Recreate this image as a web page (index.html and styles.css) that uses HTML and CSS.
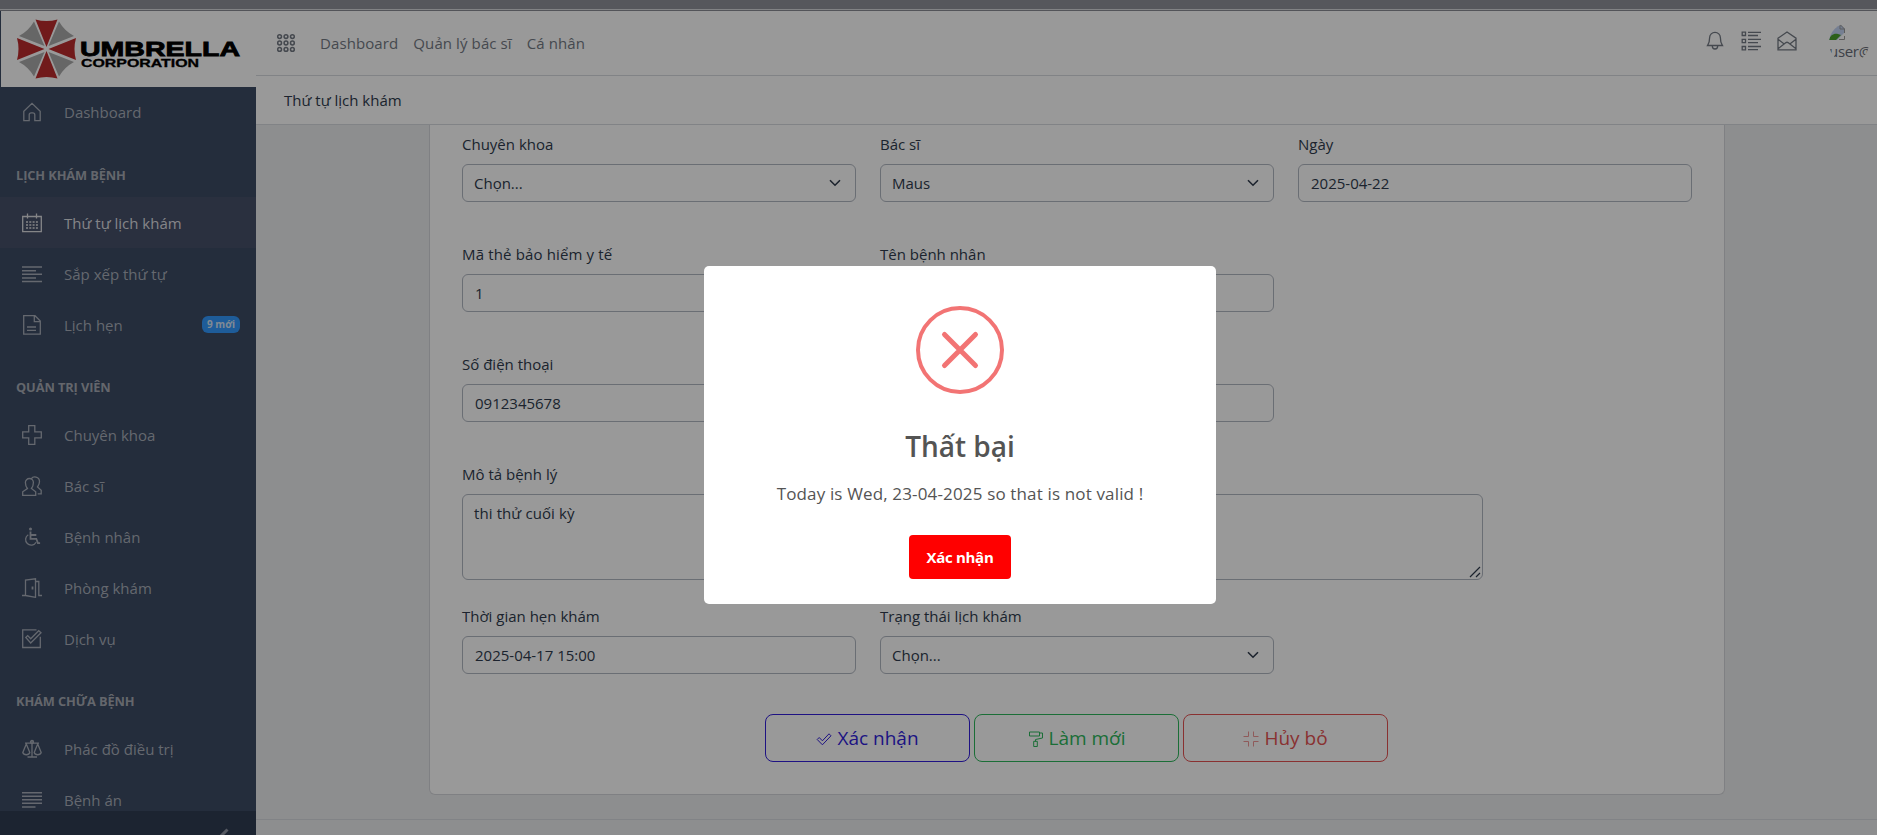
FILE: index.html
```html
<!DOCTYPE html>
<html lang="vi">
<head>
<meta charset="utf-8">
<title>Thứ tự lịch khám</title>
<link rel="stylesheet" href="styles.css">
</head>
<body>
<svg class="sprite" aria-hidden="true">
  <symbol id="home" viewBox="0 0 20 20"><path d="M1.800 18.600V9.200L10 1.400l8.200 7.800v9.400h-5.400v-5.800a2 2 0 0 0-2-2H9.200a2 2 0 0 0-2 2v5.800z"/></symbol>
  <symbol id="calendar" viewBox="0 0 20 20"><path d="M.7 3.500h18.600v15.200H.7zM5.500.5v5M14.500.5v5"/><path stroke-dasharray="2 1.300" d="M4 9h12.500M4 12h12.500M4 15h12.500" stroke-width="1.700"/></symbol>
  <symbol id="align" viewBox="0 0 20 20"><path stroke-width="1.500" d="M0 3h20M0 6.700h14M0 10.300h20M0 14h14M0 17.600h20"/></symbol>
  <symbol id="doc" viewBox="0 0 20 20"><path d="M1.700.7h11.300l5.300 5.300v13.200H1.700zM12.300.7v6h6M5 12h9M5 15.300h9"/></symbol>
  <symbol id="plus" viewBox="0 0 20 20"><path d="M6.700.7h6.100v6.200h6.500v6h-6.500v6.400H6.700v-6.400H.7v-6h6z"/></symbol>
  <symbol id="people" viewBox="0 0 20 20"><path d="M.7 19.300v-3.500l4.700-3.300c-2-2.500-2-4-2-6a4 4 0 0 1 8 0c0 2 0 3.500-2 6l4.300 3.300v3.500zM9.500 2.600C11-.2 17.500.2 17.500 5.500c0 2-.5 3.500-2 5.500l3.700 3.300v3.600h-3.500"/></symbol>
  <symbol id="wheel" viewBox="0 0 20 20"><circle cx="8.500" cy="2" r="1.500" fill="currentColor" stroke="none"/><path stroke-width="1.800" d="M8.500 4.500v7.300h5.800l1.600 4.300h2.200M8.500 8h5.800"/><path d="M6.300 7.700a5.600 5.600 0 1 0 7.800 7.500"/></symbol>
  <symbol id="door" viewBox="0 0 20 20"><path d="M0 17.500h3.500V2l10-1.200v18.500l-10-1.800M13.500 3.500h3.300v14H20"/><path d="M10.500 8.500v3" stroke-width="1.800"/></symbol>
  <symbol id="check" viewBox="0 0 20 20"><path d="M14.500.8H.7v17.700h17.600V7.800"/><path d="M3.800 8.500l1.900-1.900 3 3.100 8-8 2.300 2.100L8.700 14z"/></symbol>
  <symbol id="scale" viewBox="0 0 20 20"><path d="M10 2v16M5.500 18h9.500M3 4.200h14M4.300 5l-3.500 8.500c1 3 6 3 7 0zM15.700 5l-3.500 8.500c1 3 6 3 7 0z"/><circle cx="10" cy="3" r="1.500"/></symbol>
  <symbol id="lines" viewBox="0 0 20 20"><path stroke-width="1.500" d="M0 2.700h20M0 6.300h20M0 9.800h20M0 13.300h20M0 17h13.500"/></symbol>
  <symbol id="dots" viewBox="0 0 20 20"><g stroke-width="1.500"><circle cx="3.600" cy="3.600" r="1.900"/><circle cx="10" cy="3.600" r="1.900"/><circle cx="16.400" cy="3.600" r="1.900"/><circle cx="3.600" cy="10" r="1.900"/><circle cx="10" cy="10" r="1.900"/><circle cx="16.400" cy="10" r="1.900"/><circle cx="3.600" cy="16.400" r="1.900"/><circle cx="10" cy="16.400" r="1.900"/><circle cx="16.400" cy="16.400" r="1.900"/></g></symbol>
  <symbol id="bell" viewBox="0 0 20 20"><path d="M2.600 14.500c1.800-2.500 2-3.500 2-7.800a5.400 5.400 0 0 1 10.800 0c0 4.300.2 5.300 2 7.800zM7.300 15a2.700 3 0 0 0 5.400 0"/></symbol>
  <symbol id="list" viewBox="0 0 20 20"><path d="M1.200 1.200h3.300v3.300H1.200zM1.200 8.300h3.300v3.300H1.200zM1.200 15.500h3.300v3.300H1.200zM7 1.300h13M7 4.500h10M7 8.400h13M7 11.600h10M7 15.500h13M7 18.700h10"/></symbol>
  <symbol id="mail" viewBox="0 0 20 20"><path d="M1 7.200L10 1l9 6.200v11.600H1zM1 8.200l6.200 4.700M19 8.200l-6.200 4.700M1 17.800l8-6.200q1-.7 2 0l8 6.200"/></symbol>
  <symbol id="tick" viewBox="0 0 16 16"><path d="M1.200 8.500l2-2 3.200 3.300 6.600-7 2 2-8.600 9z"/></symbol>
  <symbol id="roller" viewBox="0 0 16 16"><path d="M1.500 1h10v4h-10zM11.500 2h3v5l-7 1.500v2M5.700 10.300h3.600v5.200H5.700z"/></symbol>
  <symbol id="shrink" viewBox="0 0 16 16"><path d="M5.500.5v5h-5M10.500.5v5h5M.5 10.500h5v5M15.500 10.500h-5v5"/></symbol>
</svg>

<div class="strip"></div>
<div class="app">
  <aside class="sidebar">
    <div class="brand">
      <svg class="logo" viewBox="0 0 255 76">
        <g transform="translate(45.500 38)">
          <path class="red" d="M0-2L-11-29.500Q0-26.500 11-29.500Z"/>
          <path class="red" d="M2 0L29.500-11Q26.500 0 29.500 11Z"/>
          <path class="red" d="M0 2L-11 29.500Q0 26.500 11 29.500Z"/>
          <path class="red" d="M-2 0L-29.500-11Q-26.500 0-29.500 11Z"/>
          <path class="grey" d="M2-3L12.500-27.500Q18-18 27.500-13Z"/>
          <path class="grey" d="M2 3L12.500 27.500Q18 18 27.500 13Z"/>
          <path class="grey" d="M-2 3L-12.500 27.500Q-18 18-27.500 13Z"/>
          <path class="grey" d="M-2-3L-12.500-27.500Q-18-18-27.500-13Z"/>
        </g>
        <text class="logo-a" x="79" y="44.700" textLength="160" lengthAdjust="spacingAndGlyphs">UMBRELLA</text>
        <text class="logo-b" x="80" y="56" textLength="118" lengthAdjust="spacingAndGlyphs">CORPORATION</text>
      </svg>
    </div>
    <nav class="menu">
      <a class="item first"><svg><use href="#home"/></svg><span>Dashboard</span></a>
      <div class="group">LỊCH KHÁM BỆNH</div>
      <a class="item active"><svg><use href="#calendar"/></svg><span>Thứ tự lịch khám</span></a>
      <a class="item"><svg><use href="#align"/></svg><span>Sắp xếp thứ tự</span></a>
      <a class="item"><svg><use href="#doc"/></svg><span>Lịch hẹn</span><b class="badge">9 mới</b></a>
      <div class="group">QUẢN TRỊ VIÊN</div>
      <a class="item"><svg><use href="#plus"/></svg><span>Chuyên khoa</span></a>
      <a class="item"><svg><use href="#people"/></svg><span>Bác sĩ</span></a>
      <a class="item"><svg><use href="#wheel"/></svg><span>Bệnh nhân</span></a>
      <a class="item"><svg><use href="#door"/></svg><span>Phòng khám</span></a>
      <a class="item"><svg><use href="#check"/></svg><span>Dịch vụ</span></a>
      <div class="group">KHÁM CHỮA BỆNH</div>
      <a class="item"><svg><use href="#scale"/></svg><span>Phác đồ điều trị</span></a>
      <a class="item"><svg><use href="#lines"/></svg><span>Bệnh án</span></a>
    </nav>
    <div class="toggler"><svg viewBox="0 0 12 18"><path d="M10.500 1.500L3 9l7.500 7.500"/></svg></div>
  </aside>

  <div class="main">
    <header class="header">
      <svg class="dots"><use href="#dots"/></svg>
      <nav class="links"><a>Dashboard</a><a>Quản lý bác sĩ</a><a>Cá nhân</a></nav>
      <div class="tools">
        <svg><use href="#bell"/></svg>
        <svg><use href="#list"/></svg>
        <svg><use href="#mail"/></svg>
        <div class="avatar">
          <svg viewBox="0 0 16 16"><path class="sky" d="M0 0h11l5 5v3L8 16H0z"/><path class="hill" d="M0 16c1-5 5-7 9-6l3 1-5 5z"/><path class="edge" d="M11 .5v4.500h4.500V9M11 .5L15.500 5M15.500 12v3.500H10"/></svg>
          <span>user@</span>
        </div>
      </div>
    </header>
    <div class="crumbs">Thứ tự lịch khám</div>
    <main class="content">
      <section class="card">
        <div class="row">
          <div class="field"><label>Chuyên khoa</label><div class="input">Chọn...<svg viewBox="0 0 12 8"><path d="M1 1.200l5 5 5-5"/></svg></div></div>
          <div class="field"><label>Bác sĩ</label><div class="input">Maus<svg viewBox="0 0 12 8"><path d="M1 1.200l5 5 5-5"/></svg></div></div>
          <div class="field"><label>Ngày</label><div class="input num">2025-04-22</div></div>
        </div>
        <div class="row">
          <div class="field"><label class="long">Mã thẻ bảo hiểm y tế</label><div class="input num">1</div></div>
          <div class="field"><label>Tên bệnh nhân</label><div class="input"></div></div>
        </div>
        <div class="row">
          <div class="field"><label>Số điện thoại</label><div class="input num">0912345678</div></div>
          <div class="field"><label></label><div class="input"></div></div>
        </div>
        <div class="row area-row">
          <div class="field wide"><label>Mô tả bệnh lý</label><div class="input area">thi thử cuối kỳ<svg class="grip" viewBox="0 0 12 12"><path d="M1 11L11 1M7 11l4-4"/></svg></div></div>
        </div>
        <div class="row last">
          <div class="field"><label>Thời gian hẹn khám</label><div class="input num">2025-04-17 15:00</div></div>
          <div class="field"><label>Trạng thái lịch khám</label><div class="input">Chọn...<svg viewBox="0 0 12 8"><path d="M1 1.200l5 5 5-5"/></svg></div></div>
        </div>
        <div class="actions">
          <button class="btn blue"><svg><use href="#tick"/></svg>Xác nhận</button>
          <button class="btn green"><svg><use href="#roller"/></svg>Làm mới</button>
          <button class="btn red-btn"><svg><use href="#shrink"/></svg>Hủy bỏ</button>
        </div>
      </section>
      <footer class="footer"></footer>
    </main>
  </div>
</div>

<div class="overlay">
  <div class="modal">
    <svg class="fail" viewBox="0 0 88 88"><circle cx="44" cy="44" r="42"/><path d="M28.500 28.500l31 31M59.500 28.500l-31 31"/></svg>
    <h2>Thất bại</h2>
    <p>Today is Wed, 23-04-2025 so that is not valid !</p>
    <button>Xác nhận</button>
  </div>
</div>
</body>
</html>
```
FILE: styles.css
```css
* { box-sizing: border-box; }
body {
  margin: 0;
  height: 835px;
  overflow: hidden;
  font-family: "Open Sans", "Noto Sans", sans-serif;
  font-size: 15px;
  letter-spacing: 0;
  color: #2f3b4d;
  background: #fff;
}
svg { fill: none; stroke: currentColor; stroke-width: 1.3; flex: none; }
.sprite { display: none; }
.strip { height: 11px; background: #8f9199; border-bottom: 1px solid #8b8d95; box-shadow: inset 0 -1px #d8d9dd; }
.app { display: flex; height: 824px; }

/* Sidebar */
.sidebar { width: 256px; flex: none; background: #3c4b64; display: flex; flex-direction: column; color: #a8aeb9; }
.brand { height: 76px; flex: none; margin-left: 1px; background: #fff; }
.logo { display: block; width: 255px; height: 76px; stroke: none; }
.red { fill: #bd2c2e; }
.grey { fill: #aaa; }
.logo-a, .logo-b { fill: #000; font-family: "Liberation Sans", sans-serif; font-weight: bold; stroke: #000; }
.logo-a { font-size: 20.500px; stroke-width: .8; }
.logo-b { font-size: 11.500px; stroke-width: .3; }
.menu { height: 724px; overflow: hidden; }
.item { display: flex; align-items: center; height: 51px; padding: 0 16px 0 22px; }
.item.first { padding-bottom: 2px; }
.item svg { width: 20px; height: 20px; margin-right: 22px; }
.item.active { background: #475069; color: #dddee2; }
.badge { margin-left: auto; height: 17px; padding: 0 5px; border-radius: 6px; background: #3399ff; color: #d6e6f7; font-size: 10px; line-height: 17px; }
.group { height: 59px; padding-top: 28px; padding-left: 16px; font-size: 12.800px; line-height: 18px; font-weight: 700; letter-spacing: -0.1px; color: #a7abb4; }
.toggler { height: 24px; flex: none; background: #303c53; color: #9096a3; padding: 17px 0 0 217px; overflow: hidden; }
.toggler svg { width: 12px; height: 18px; stroke-width: 3; display: block; }

/* Header */
.main { flex: 1; min-width: 0; display: flex; flex-direction: column; }
.header { height: 65px; flex: none; display: flex; align-items: center; padding: 0 8px 0 20px; border-bottom: 1px solid #d8dbe0; color: #747a84; }
.dots { width: 20px; height: 20px; }
.links { display: flex; gap: 15px; margin-left: 24px; letter-spacing: 0.1px; }
.tools { display: flex; align-items: center; margin-left: auto; gap: 16px; }
.tools > svg { width: 20px; height: 20px; margin-top: -4px; }
.avatar { width: 40px; height: 40px; margin-left: 16px; border-radius: 50%; overflow: hidden; font-size: 15px; line-height: 20px; color: #686d78; }
.avatar svg { display: block; width: 16px; height: 16px; stroke-width: 1; margin-top: 1px; }
.avatar span { display: block; margin-top: 1px; letter-spacing: -0.3px; }
.sky { fill: #c4d4f4; stroke: none; }
.hill { fill: #4aa02c; stroke: none; }
.edge { stroke: #999; }
.crumbs { height: 49px; flex: none; padding-left: 28px; line-height: 48px; border-bottom: 1px solid #d8dbe0; }

/* Form */
.content { flex: 1; background: #ebedef; overflow: hidden; }
.card { width: 1296px; height: 670px; margin-left: 173px; padding: 9px 32px 0; background: #fff; border: 1px solid #d4d6da; border-top: 0; border-radius: 0 0 6px 6px; }
.row { display: flex; gap: 24px; height: 110px; }
.field { width: 394px; }
.field.wide { width: 1021px; }
.field label { display: block; height: 30px; line-height: 20px; }
.field label.long { letter-spacing: 0.150px; }
.input { position: relative; display: flex; align-items: center; justify-content: space-between; height: 38px; padding: 0 14px 0 11px; border: 1px solid #b1b7c1; border-radius: 6px; }
.input.num { padding-left: 12px; }
.input svg { width: 12px; height: 8px; stroke-width: 1.600; }
.area-row { height: 142px; }
.input.area { height: 86px; align-items: flex-start; padding-top: 7px; line-height: 22px; letter-spacing: 0.1px; }
.input svg.grip { position: absolute; right: 1px; bottom: 1px; width: 12px; height: 12px; stroke-width: 1.200; }
.last { height: 108px; }
.actions { display: flex; justify-content: center; gap: 4px; margin-right: 2px; }
.btn { width: 205px; height: 48px; display: flex; align-items: center; justify-content: center; gap: 5px; padding: 0 0 0 1px; border: 1px solid; border-radius: 8px; background: none; font: 19px "Open Sans", "Noto Sans", sans-serif; letter-spacing: 0; }
.btn svg { width: 16px; height: 16px; margin-top: 2px; stroke-width: 1; }
.blue { color: #321fdb; }
.green { color: #2eb85c; }
.red-btn { color: #e55353; }
.red-btn svg { opacity: .6; }
.footer { margin-top: 24px; height: 20px; border-top: 1px solid #d8dbe0; }

/* Dialog */
.overlay { position: absolute; inset: 0; display: flex; justify-content: center; align-items: center; padding-left: 43px; background: rgba(0, 0, 0, .4); }
.modal { width: 512px; height: 338px; margin-top: 35px; display: flex; flex-direction: column; align-items: center; padding-top: 40px; border-radius: 5px; background: #fff; color: #545454; }
.fail { width: 88px; height: 88px; color: #f27474; stroke-width: 4; }
.fail path { stroke-width: 5; stroke-linecap: round; }
.modal h2 { margin: 31px 0 0; font-size: 28px; line-height: 42px; font-weight: 600; letter-spacing: 0; }
.modal p { margin: 15px 0 0; font-size: 17px; line-height: 24px; letter-spacing: 0.150px; }
.modal button { width: 102px; height: 44px; margin-top: 29px; border: 0; border-radius: 4px; background: #f00; color: #fff; font: 700 15px "Open Sans", "Noto Sans", sans-serif; letter-spacing: -0.3px; }
```
